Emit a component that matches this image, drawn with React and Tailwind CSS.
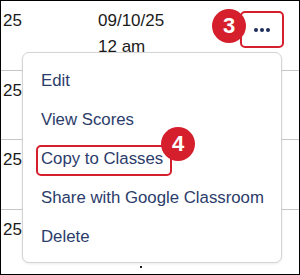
import React from "react";

const font = { fontFamily: '"Liberation Sans", Arial, sans-serif' };

function Row({ h, children, last }) {
  return (
    <div
      className={`flex shrink-0 ${last ? "" : "border-b border-[#c6c6c6]"}`}
      style={{ height: h }}
    >
      {children}
    </div>
  );
}

function Cells({ date, time, button }) {
  return (
    <>
      <div className="w-[97px] shrink-0 pl-[2px] pt-[7px] text-[17px] leading-[26px] text-[#1b1b1b]">
        25
      </div>
      {date && (
        <div className="pt-[7px] text-[17px] leading-[26px] text-[#1b1b1b]">
          <div>{date}</div>
          <div>{time}</div>
        </div>
      )}
      {button && (
        <div className="ml-auto mr-[15px] mt-[10px] flex h-[37px] w-[44px] items-center justify-center gap-[2px] rounded-[5px] border-2 border-[#d51f2c] bg-white">
          <span className="h-[4px] w-[4px] rounded-full bg-[#1f2d5c]" />
          <span className="h-[4px] w-[4px] rounded-full bg-[#1f2d5c]" />
          <span className="h-[4px] w-[4px] rounded-full bg-[#1f2d5c]" />
        </div>
      )}
    </>
  );
}

function Badge({ n, className }) {
  return (
    <div
      className={`absolute flex h-[34px] w-[34px] items-center justify-center rounded-full bg-[#d51f2c] text-[22px] font-bold leading-none text-white ${className}`}
    >
      {n}
    </div>
  );
}

export default function App() {
  const items = ["Edit", "View Scores", "Copy to Classes", "Share with Google Classroom", "Delete"];
  return (
    <div
      className="relative h-[275px] w-[300px] overflow-hidden border border-black bg-white"
      style={font}
    >
      <div className="flex flex-col">
        <Row h={70}>
          <Cells date="09/10/25" time="12 am" button />
        </Row>
        <Row h={69}>
          <Cells />
        </Row>
        <Row h={70}>
          <Cells />
        </Row>
        <Row h={70} last>
          <Cells />
        </Row>
      </div>

      <Badge n="3" className="left-[211px] top-[8px]" />

      <div className="absolute left-[21px] top-[51px] h-[211px] w-[260px] rounded-[7px] border border-[#d4d4d4] bg-white py-[8px] shadow-[0_1px_3px_rgba(0,0,0,0.08)]">
        {items.map((t) => (
          <div
            key={t}
            className="flex h-[39px] items-center pl-[18px] text-[16.8px] text-[#2b3c6b]"
          >
            {t}
          </div>
        ))}
        <div className="absolute left-[13px] top-[92px] h-[31px] w-[136px] rounded-[5px] border-2 border-[#d51f2c]" />
        <Badge n="4" className="left-[138px] top-[74px]" />
      </div>
      <div className="absolute left-[139px] top-[265px] h-[2px] w-[2px] bg-[#1b1b1b]" />
    </div>
  );
}
